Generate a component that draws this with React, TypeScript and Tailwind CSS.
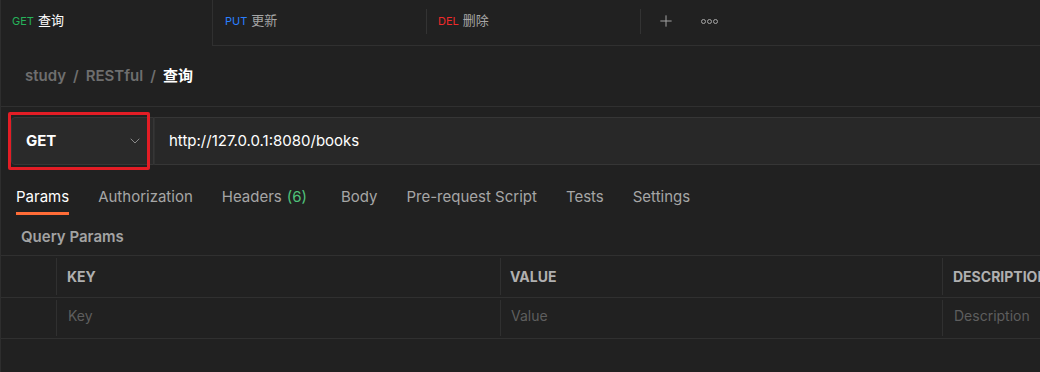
import { ChevronDown, Plus } from 'lucide-react';

const tabs = [
  { label: 'Params', active: true },
  { label: 'Authorization' },
  { label: 'Headers', count: '(6)' },
  { label: 'Body' },
  { label: 'Pre-request Script' },
  { label: 'Tests' },
  { label: 'Settings' },
];

function Sep() {
  return <div className="w-px self-stretch my-[2px] bg-[#303030]" />;
}

export default function App() {
  return (
    <div className="w-[1040px] h-[372px] overflow-hidden bg-[#212121] border-l border-[#2e2e2e] font-['Inter','Noto_Sans_CJK_SC',sans-serif] text-[#a6a6a6]">
      {/* request tabs */}
      <div className="flex h-[46px]">
        <div className="w-[212px] shrink-0 border-r border-[#303030] flex items-center pl-[11px] pb-[4px] gap-[4px]">
          <span className="text-[11px] text-[#26b25a]">GET</span>
          <span className="text-[13px] text-white">查询</span>
        </div>
        <div className="flex-1 flex items-center pb-[3px] border-b border-[#303030]">
          <div className="w-[213px] flex items-center pl-[12px] gap-[4px]">
            <span className="text-[11px] text-[#2a7fff]">PUT</span>
            <span className="text-[13px] text-[#a6a6a6]">更新</span>
          </div>
          <div className="w-px h-[25px] bg-[#333]" />
          <div className="w-[213px] flex items-center pl-[11px] gap-[4px]">
            <span className="text-[11px] text-[#ef2a2a]">DEL</span>
            <span className="text-[13px] text-[#a6a6a6]">删除</span>
          </div>
          <div className="w-px h-[25px] bg-[#333]" />
          <Plus className="ml-[16px] w-[18px] h-[18px] text-[#a6a6a6]" strokeWidth={1.3} />
          <div className="ml-[26px] flex gap-[1px]">
            {[0, 1, 2].map((i) => (
              <span key={i} className="w-[5px] h-[5px] rounded-full border border-[#a6a6a6]" />
            ))}
          </div>
        </div>
      </div>

      {/* breadcrumb */}
      <div className="h-[61px] border-b border-[#303030] flex items-center pl-[24px] pt-[1px] text-[15px] font-semibold text-[#6e6e6e] gap-[7px]">
        <span>study</span>
        <span>/</span>
        <span>RESTful</span>
        <span>/</span>
        <span className="text-white">查询</span>
      </div>

      {/* url bar */}
      <div className="pl-[10px] pt-[10px] flex">
        <div className="relative w-[143px] h-[48px] shrink-0 bg-[#2a2a2a] border border-[#363636] rounded-l-[4px] flex items-center justify-between pl-[14px] pr-[10px]">
          <span className="text-[15px] font-bold text-white">GET</span>
          <ChevronDown className="w-[16px] h-[16px] text-[#8a8a8a]" strokeWidth={1.5} />
          <div className="absolute left-[-4px] top-[-6px] w-[142px] h-[58px] border-[3px] border-[#e31d25] rounded-[2px]" />
        </div>
        <div className="flex-1 h-[48px] bg-[#282828] border-y border-[#363636] border-l border-l-[#303030] flex items-center pl-[14px] text-[15px] text-white">
          http://127.0.0.1:8080/books
        </div>
      </div>

      {/* option tabs */}
      <div className="flex pl-[15px] gap-[29px] mt-[17px] text-[15px]">
        {tabs.map((t) => (
          <div key={t.label} className={`flex flex-col ${t.count ? 'mr-[5px]' : ''}`}>
            <span className={`h-[30px] flex items-center ${t.active ? 'text-white' : 'text-[#a6a6a6]'}`}>
              {t.label}
              {t.count && <span className="ml-[5px] text-[#4fc17a]">{t.count}</span>}
            </span>
            <span className={`h-[3px] ${t.active ? 'bg-[#ff6c37]' : ''}`} />
          </div>
        ))}
      </div>

      <div className="pl-[20px] h-[40px] flex items-center pt-[5px] text-[15px] font-semibold text-[#a3a3a3]">
        Query Params
      </div>

      {/* params table */}
      <div className="border-t border-[#303030] text-[14px]">
        <div className="flex h-[42px] border-b border-[#303030]">
          <div className="w-[55px]" />
          <Sep />
          <div className="w-[443px] flex items-center pl-[10px] font-bold text-[#b0b0b0]">KEY</div>
          <Sep />
          <div className="w-[441px] flex items-center pl-[9px] font-bold text-[#b0b0b0]">VALUE</div>
          <Sep />
          <div className="flex-1 flex items-center pl-[10px] font-bold text-[#b0b0b0] whitespace-nowrap overflow-hidden">DESCRIPTION</div>
        </div>
        <div className="flex h-[41px] border-b border-[#303030]">
          <div className="w-[55px]" />
          <Sep />
          <div className="w-[443px] flex items-center pl-[11px] pb-[5px] text-[#5e5e5e]">Key</div>
          <Sep />
          <div className="w-[441px] flex items-center pl-[10px] pb-[5px] text-[#5e5e5e]">Value</div>
          <Sep />
          <div className="flex-1 flex items-center pl-[11px] pb-[5px] text-[#5e5e5e] whitespace-nowrap">Description</div>
        </div>
      </div>
    </div>
  );
}
